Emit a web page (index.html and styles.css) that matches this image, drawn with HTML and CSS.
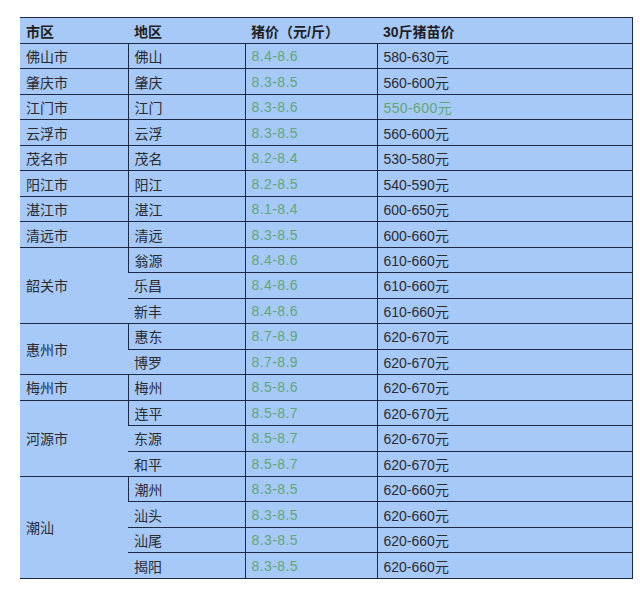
FILE: index.html
```html
<!DOCTYPE html>
<html lang="zh">
<head>
<meta charset="utf-8">
<title>猪价</title>
<link rel="stylesheet" href="styles.css">
</head>
<body>
<table class="price-table">
  <colgroup>
    <col class="c1"><col class="c2"><col class="c3"><col class="c4">
  </colgroup>
  <thead>
    <tr class="head"><th>市区</th><th>地区</th><th>猪价（元/斤）</th><th>30斤猪苗价</th></tr>
  </thead>
  <tbody>
    <tr><td>佛山市</td><td>佛山</td><td class="g">8.4-8.6</td><td>580-630元</td></tr>
    <tr><td>肇庆市</td><td>肇庆</td><td class="g">8.3-8.5</td><td>560-600元</td></tr>
    <tr><td>江门市</td><td>江门</td><td class="g">8.3-8.6</td><td class="g">550-600元</td></tr>
    <tr><td>云浮市</td><td>云浮</td><td class="g">8.3-8.5</td><td>560-600元</td></tr>
    <tr><td>茂名市</td><td>茂名</td><td class="g">8.2-8.4</td><td>530-580元</td></tr>
    <tr><td>阳江市</td><td>阳江</td><td class="g">8.2-8.5</td><td>540-590元</td></tr>
    <tr><td>湛江市</td><td>湛江</td><td class="g">8.1-8.4</td><td>600-650元</td></tr>
    <tr><td>清远市</td><td>清远</td><td class="g">8.3-8.5</td><td>600-660元</td></tr>
    <tr><td rowspan="3">韶关市</td><td>翁源</td><td class="g">8.4-8.6</td><td>610-660元</td></tr>
    <tr><td>乐昌</td><td class="g">8.4-8.6</td><td>610-660元</td></tr>
    <tr><td>新丰</td><td class="g">8.4-8.6</td><td>610-660元</td></tr>
    <tr><td rowspan="2">惠州市</td><td>惠东</td><td class="g">8.7-8.9</td><td>620-670元</td></tr>
    <tr><td>博罗</td><td class="g">8.7-8.9</td><td>620-670元</td></tr>
    <tr><td>梅州市</td><td>梅州</td><td class="g">8.5-8.6</td><td>620-670元</td></tr>
    <tr><td rowspan="3">河源市</td><td>连平</td><td class="g">8.5-8.7</td><td>620-670元</td></tr>
    <tr><td>东源</td><td class="g">8.5-8.7</td><td>620-670元</td></tr>
    <tr><td>和平</td><td class="g">8.5-8.7</td><td>620-670元</td></tr>
    <tr><td rowspan="4">潮汕</td><td>潮州</td><td class="g">8.3-8.5</td><td>620-660元</td></tr>
    <tr><td>汕头</td><td class="g">8.3-8.5</td><td>620-660元</td></tr>
    <tr><td>汕尾</td><td class="g">8.3-8.5</td><td>620-660元</td></tr>
    <tr><td>揭阳</td><td class="g">8.3-8.5</td><td>620-660元</td></tr>
  </tbody>
</table>
</body>
</html>
```

FILE: styles.css
```css
html, body {
  margin: 0;
  padding: 0;
  background: #ffffff;
}
body {
  padding: 17px 0 0 20px;
  font-family: "Liberation Sans", Arial, "Noto Sans CJK SC", sans-serif;
  font-size: 14px;
  color: #2b2b2f;
}
.price-table {
  width: 612px;
  border-collapse: collapse;
  table-layout: fixed;
  background: #a7c9f7;
  border-top: 1px solid #1d2a45;
  border-bottom: 1px solid #1d2a45;
  border-right: 1px solid #1d2a45;
}
.c1 { width: 108px; }
.c2 { width: 117px; }
.c3 { width: 132px; }
.c4 { width: 255px; }
.price-table th,
.price-table td {
  padding: 0 0 0 6px;
  text-align: left;
  vertical-align: middle;
  border-top: 1px solid #1d2a45;
  border-bottom: 1px solid #1d2a45;
  border-left: 1px solid #1d2a45;
  white-space: nowrap;
}
.price-table th {
  height: 25px;
  font-weight: bold;
  color: #1f1f24;
  border-left: none;
}
.price-table tr > td:first-child {
  border-left: none;
}
.price-table tbody tr {
  height: 25.48px;
}
.g {
  color: #5fa873;
  letter-spacing: 0.4px;
}
```
